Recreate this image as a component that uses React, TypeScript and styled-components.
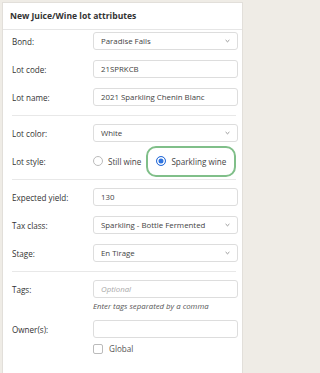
import React from 'react'
import styled, { createGlobalStyle } from 'styled-components'

const GlobalStyle = createGlobalStyle`
  html, body {
    margin: 0;
    padding: 0;
    background: #efece6;
    font-family: "Open Sans", "Liberation Sans", sans-serif;
    color: #333;
    overflow: hidden;
  }
`

const Panel = styled.div`
  margin: 2px 0 0 2px;
  width: 241px;
  height: 371px;
  background: #fff;
  border: 1px solid #e2dfda;
  border-bottom: none;
  box-sizing: border-box;
`

const Header = styled.div`
  height: 26px;
  display: flex;
  align-items: center;
  padding-left: 7px;
  border-bottom: 1px solid #e6e6e6;
  font-size: 8.55px;
  font-weight: 700;
  color: #333;
`

const Body = styled.div`
  padding: 2px 6px 0 9px;
  display: flex;
  flex-direction: column;
`

const Row = styled.div`
  display: grid;
  grid-template-columns: 81px 145px;
  align-items: center;
  margin-bottom: 10px;
`

const Label = styled.div`
  font-size: 8.1px;
  color: #333;
`

const Field = styled.div<{ $placeholder?: boolean }>`
  height: 18px;
  box-sizing: border-box;
  border: 1px solid #ddd;
  border-radius: 3px;
  padding: 0 7px;
  display: flex;
  align-items: center;
  justify-content: space-between;
  font-size: 7.85px;
  white-space: nowrap;
  color: ${p => (p.$placeholder ? '#aaa' : '#444')};
  font-style: ${p => (p.$placeholder ? 'italic' : 'normal')};
`

const Separator = styled.div`
  height: 1px;
  background: #e8e8e8;
  margin: -1px 0 8px;
`

const RadioGroup = styled.div`
  display: flex;
  align-items: center;
  height: 18px;
`

const RadioOption = styled.label<{ $highlight?: boolean }>`
  position: relative;
  flex-shrink: 0;
  display: flex;
  align-items: center;
  gap: 5px;
  font-size: 8.1px;
  color: #444;
  white-space: nowrap;
  margin-right: 15px;

  ${p =>
    p.$highlight &&
    `
    &::after {
      content: '';
      position: absolute;
      left: -10px;
      top: -10px;
      width: 90px;
      height: 31px;
      box-sizing: border-box;
      border: 2.6px solid #80bf89;
      border-radius: 10px;
    }
  `}
`

const RadioCircle = styled.span<{ $checked?: boolean }>`
  flex-shrink: 0;
  width: 10px;
  height: 10px;
  box-sizing: border-box;
  border-radius: 50%;
  border: 1px solid ${p => (p.$checked ? '#2d6fd8' : '#bbb')};
  background: ${p => (p.$checked ? '#2f74e0' : '#fff')};
  box-shadow: ${p => (p.$checked ? 'inset 0 0 0 1.5px #fff' : 'none')};
`

const Helper = styled.div`
  margin: -7px 0 8px 81px;
  font-size: 7.8px;
  font-style: italic;
  color: #555;
  line-height: 11px;
  white-space: nowrap;
`

const CheckRow = styled.label`
  margin: -5px 0 0 81px;
  display: flex;
  align-items: center;
  gap: 6px;
  font-size: 8.1px;
  color: #555;
`

const CheckBox = styled.span`
  width: 10px;
  height: 10px;
  box-sizing: border-box;
  border: 1px solid #bbb;
  border-radius: 2px;
`

const Chevron = () => (
  <svg width="5" height="4" viewBox="0 0 5 4">
    <path d="M0.6 1 L2.5 2.8 L4.4 1" fill="none" stroke="#888" strokeWidth="0.9" />
  </svg>
)

const Select: React.FC<{ value: string }> = ({ value }) => (
  <Field>
    <span>{value}</span>
    <Chevron />
  </Field>
)

export default function App() {
  return (
    <>
      <GlobalStyle />
      <Panel>
        <Header>New Juice/Wine lot attributes</Header>
        <Body>
          <Row>
            <Label>Bond:</Label>
            <Select value="Paradise Falls" />
          </Row>
          <Row>
            <Label>Lot code:</Label>
            <Field>21SPRKCB</Field>
          </Row>
          <Row>
            <Label>Lot name:</Label>
            <Field>2021 Sparkling Chenin Blanc</Field>
          </Row>
          <Separator />
          <Row>
            <Label>Lot color:</Label>
            <Select value="White" />
          </Row>
          <Row>
            <Label>Lot style:</Label>
            <RadioGroup>
              <RadioOption>
                <RadioCircle />
                Still wine
              </RadioOption>
              <RadioOption $highlight>
                <RadioCircle $checked />
                Sparkling wine
              </RadioOption>
            </RadioGroup>
          </Row>
          <Separator />
          <Row>
            <Label>Expected yield:</Label>
            <Field>130</Field>
          </Row>
          <Row>
            <Label>Tax class:</Label>
            <Select value="Sparkling - Bottle Fermented" />
          </Row>
          <Row>
            <Label>Stage:</Label>
            <Select value="En Tirage" />
          </Row>
          <Separator />
          <Row>
            <Label>Tags:</Label>
            <Field $placeholder>Optional</Field>
          </Row>
          <Helper>Enter tags separated by a comma</Helper>
          <Row>
            <Label>Owner(s):</Label>
            <Field />
          </Row>
          <CheckRow>
            <CheckBox />
            Global
          </CheckRow>
        </Body>
      </Panel>
    </>
  )
}
